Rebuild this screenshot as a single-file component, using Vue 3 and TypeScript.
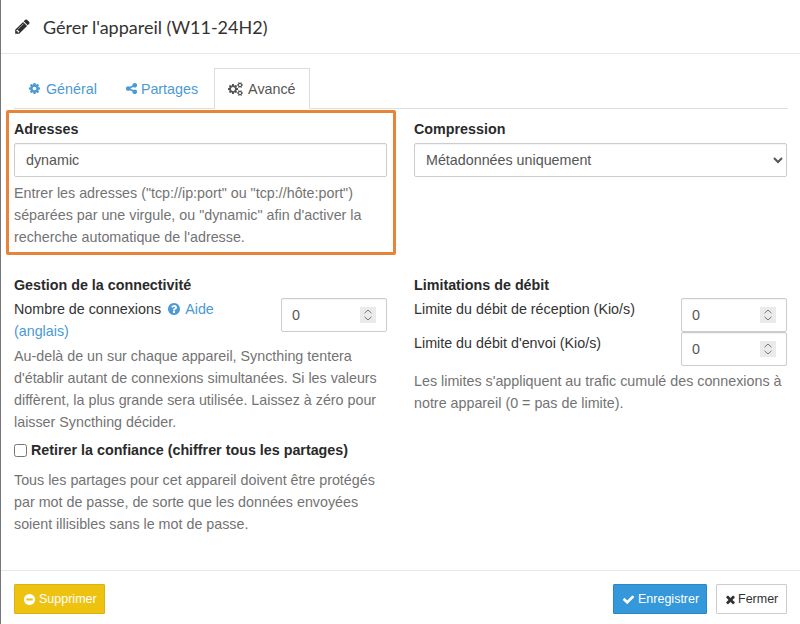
<script setup lang="ts">
const icons: Record<string, string> = {
  pencil: 'M491 1536l91-91-235-235-91 91v107h128v128h107zm523-928q0-22-22-22-10 0-17 7l-542 542q-7 7-7 17 0 22 22 22 10 0 17-7l542-542q7-7 7-17zm-54-192l416 416-832 832h-416v-416zm683 96q0 53-37 90l-166 166-416-416 166-165q36-38 90-38 53 0 91 38l235 234q37 39 37 91z',
  cog: 'M1152 896q0-106-75-181t-181-75-181 75-75 181 75 181 181 75 181-75 75-181zm512-109v222q0 12-8 23t-20 13l-185 28q-19 54-39 91 35 50 107 138 10 12 10 25t-9 23q-27 37-99 108t-94 71q-12 0-26-9l-138-108q-44 23-91 38-16 136-29 186-7 28-36 28h-222q-14 0-24.5-8.5t-11.5-21.5l-28-184q-49-16-90-37l-141 107q-10 9-25 9-14 0-25-11-126-114-165-168-7-10-7-23 0-12 8-23 15-21 51-66.5t54-70.5q-27-50-41-99l-183-27q-13-2-21-12.5t-8-23.5v-222q0-12 8-23t19-13l186-28q14-46 39-92-40-57-107-138-10-12-10-24 0-10 9-23 26-36 98.5-107.5t94.5-71.5q13 0 26 10l138 107q44-23 91-38 16-136 29-186 7-28 36-28h222q14 0 24.5 8.5t11.5 21.5l28 184q49 16 90 37l142-107q9-9 24-9 13 0 25 10 129 119 165 170 7 8 7 22 0 12-8 23-15 21-51 66.5t-54 70.5q26 50 41 98l183 28q13 2 21 12.5t8 23.5z',
  share: 'M1344 1024q133 0 226.5 93.5t93.5 226.5-93.5 226.5-226.5 93.5-226.5-93.5-93.5-226.5q0-12 2-34l-360-180q-92 86-218 86-133 0-226.5-93.5t-93.5-226.5 93.5-226.5 226.5-93.5q126 0 218 86l360-180q-2-22-2-34 0-133 93.5-226.5t226.5-93.5 226.5 93.5 93.5 226.5-93.5 226.5-226.5 93.5q-126 0-218-86l-360 180q2 22 2 34t-2 34l360 180q92-86 218-86z',
  question: 'M1024 1376v-192q0-14-9-23t-23-9h-192q-14 0-23 9t-9 23v192q0 14 9 23t23 9h192q14 0 23-9t9-23zm256-672q0-88-55.5-163t-138.5-116-170-41q-243 0-371 213-15 24 8 42l132 100q7 6 19 6 16 0 25-12 53-68 86-92 34-24 86-24 48 0 85.5 26t37.5 59q0 38-20 61t-68 45q-63 28-115.5 86.5t-52.5 125.5v36q0 14 9 23t23 9h192q14 0 23-9t9-23q0-19 21.5-49.5t54.5-49.5q32-18 49-28.5t46-35 44.5-48 28-60.5 12.5-81zm384 192q0 209-103 385.5t-279.5 279.5-385.5 103-385.5-103-279.5-279.5-103-385.5 103-385.5 279.5-279.5 385.5-103 385.5 103 279.5 279.5 103 385.5z',
  minus: 'M1344 960v-128q0-26-19-45t-45-19h-768q-26 0-45 19t-19 45v128q0 26 19 45t45 19h768q26 0 45-19t19-45zm320-64q0 209-103 385.5t-279.5 279.5-385.5 103-385.5-103-279.5-279.5-103-385.5 103-385.5 279.5-279.5 385.5-103 385.5 103 279.5 279.5 103 385.5z',
  check: 'M1671 566q0 40-28 68l-724 724-136 136q-28 28-68 28t-68-28l-136-136-362-362q-28-28-28-68t28-68l136-136q28-28 68-28t68 28l294 295 656-657q28-28 68-28t68 28l136 136q28 28 28 68z',
  times: 'M1490 1322q0 40-28 68l-136 136q-28 28-68 28t-68-28l-294-294-294 294q-28 28-68 28t-68-28l-136-136q-28-28-28-68t28-68l294-294-294-294q-28-28-28-68t28-68l136-136q28-28 68-28t68 28l294 294 294-294q28-28 68-28t68 28l136 136q28 28 28 68t-28 68l-294 294 294 294q28 28 28 68z'
}
const cogs = 'M896 896q0-106-75-181t-181-75-181 75-75 181 75 181 181 75 181-75 75-181zm768 512q0-52-38-90t-90-38-90 38-38 90q0 53 37.5 90.5t90.5 37.5 90.5-37.5 37.5-90.5zm0-1024q0-52-38-90t-90-38-90 38-38 90q0 53 37.5 90.5t90.5 37.5 90.5-37.5 37.5-90.5zm-384 421v185q0 10-7 19.5t-16 10.5l-155 24q-11 35-32 76 34 48 90 115 7 11 7 20 0 12-7 19-23 30-82.5 89.5t-78.5 59.5q-11 0-21-7l-115-90q-37 19-77 31-11 108-23 155-7 24-30 24h-186q-11 0-20-7.5t-10-17.5l-23-153q-34-10-75-31l-118 89q-7 7-20 7-11 0-21-8-144-133-144-160 0-9 7-19 10-14 41-53t47-61q-23-44-35-82l-152-24q-10-1-17-9.5t-7-19.5v-185q0-10 7-19.5t16-10.5l155-24q11-35 32-76-34-48-90-115-7-11-7-20 0-12 7-20 22-30 82-89t79-59q11 0 21 7l115 90q34-18 77-32 11-108 23-154 7-24 30-24h186q11 0 20 7.5t10 17.5l23 153q34 10 75 31l118-89q8-7 20-7 11 0 21 8 144 133 144 160 0 8-7 19-12 16-42 54t-45 60q23 48 34 82l152 23q10 2 17 10.5t7 19.5zm640 533v140q0 16-149 31-12 27-30 52 51 113 51 138 0 4-4 7-122 71-124 71-8 0-46-47t-52-68q-20 2-30 2t-30-2q-14 21-52 68t-46 47q-2 0-124-71-4-3-4-7 0-25 51-138-18-25-30-52-149-15-149-31v-140q0-16 149-31 13-29 30-52-51-113-51-138 0-4 4-7 4-2 35-20t59-34 30-16q8 0 46 46.5t52 67.5q20-2 30-2t30 2q51-71 92-112l6-2q4 0 124 70 4 3 4 7 0 25-51 138 17 23 30 52 149 15 149 31zm0-1024v140q0 16-149 31-12 27-30 52 51 113 51 138 0 4-4 7-122 71-124 71-8 0-46-47t-52-68q-20 2-30 2t-30-2q-14 21-52 68t-46 47q-2 0-124-71-4-3-4-7 0-25 51-138-18-25-30-52-149-15-149-31v-140q0-16 149-31 13-29 30-52-51-113-51-138 0-4 4-7 4-2 35-20t59-34 30-16q8 0 46 46.5t52 67.5q20-2 30-2t30 2q51-71 92-112l6-2q4 0 124 70 4 3 4 7 0 25-51 138 17 23 30 52 149 15 149 31z'
</script>

<template>
  <div class="dialog">
    <header class="head">
      <svg class="pencil" viewBox="0 0 1792 1792"><path :d="icons.pencil" /></svg>
      <h1>Gérer l'appareil (W11-24H2)</h1>
    </header>

    <div class="body">
      <nav class="tabs">
        <a class="tab general"><svg class="ico" viewBox="0 0 1792 1792"><path :d="icons.cog" /></svg>Général</a>
        <a class="tab shares"><svg class="ico" viewBox="0 0 1792 1792"><path :d="icons.share" /></svg>Partages</a>
        <a class="tab active"><svg class="ico cogs" viewBox="0 0 2048 1792"><path :d="cogs" /></svg>Avancé</a>
      </nav>

      <div class="grid first">
        <section>
          <label class="strong">Adresses</label>
          <input class="control" type="text" value="dynamic" />
          <p class="help">Entrer les adresses ("tcp://ip:port" ou "tcp://hôte:port") séparées par une virgule, ou "dynamic" afin d'activer la recherche automatique de l'adresse.</p>
        </section>
        <section>
          <label class="strong">Compression</label>
          <select class="control">
            <option>Métadonnées uniquement</option>
          </select>
        </section>
      </div>

      <div class="grid second">
        <section>
          <label class="strong heading">Gestion de la connectivité</label>
          <div class="num-row">
            <div class="num-label">Nombre de connexions <a class="link"><svg class="help-ico" viewBox="0 0 1792 1792"><path :d="icons.question" /></svg> Aide (anglais)</a></div>
            <div class="num-wrap">
              <input class="control num" type="number" value="0" />
              <svg class="spin" viewBox="0 0 16 16"><path d="M4.5 6.2 8 3l3.5 3.2M4.5 9.8 8 13l3.5-3.2" /></svg>
            </div>
          </div>
          <p class="help conn">Au-delà de un sur chaque appareil, Syncthing tentera d'établir autant de connexions simultanées. Si les valeurs diffèrent, la plus grande sera utilisée. Laissez à zéro pour laisser Syncthing décider.</p>
          <label class="check strong"><input type="checkbox" /> Retirer la confiance (chiffrer tous les partages)</label>
          <p class="help untrust">Tous les partages pour cet appareil doivent être protégés par mot de passe, de sorte que les données envoyées soient illisibles sans le mot de passe.</p>
        </section>
        <section>
          <label class="strong heading">Limitations de débit</label>
          <div class="num-row">
            <div class="num-label">Limite du débit de réception (Kio/s)</div>
            <div class="num-wrap">
              <input class="control num" type="number" value="0" />
              <svg class="spin" viewBox="0 0 16 16"><path d="M4.5 6.2 8 3l3.5 3.2M4.5 9.8 8 13l3.5-3.2" /></svg>
            </div>
          </div>
          <div class="num-row">
            <div class="num-label">Limite du débit d'envoi (Kio/s)</div>
            <div class="num-wrap">
              <input class="control num" type="number" value="0" />
              <svg class="spin" viewBox="0 0 16 16"><path d="M4.5 6.2 8 3l3.5 3.2M4.5 9.8 8 13l3.5-3.2" /></svg>
            </div>
          </div>
          <p class="help limits">Les limites s'appliquent au trafic cumulé des connexions à notre appareil (0 = pas de limite).</p>
        </section>
      </div>
    </div>

    <footer class="foot">
      <button class="btn warn"><svg class="ico" viewBox="0 0 1792 1792"><path :d="icons.minus" /></svg>Supprimer</button>
      <div class="foot-right">
        <button class="btn primary"><svg class="ico" viewBox="0 0 1792 1792"><path :d="icons.check" /></svg>Enregistrer</button>
        <button class="btn plain"><svg class="ico" viewBox="0 0 1792 1792"><path :d="icons.times" /></svg>Fermer</button>
      </div>
    </footer>

    <div class="highlight"></div>
  </div>
</template>

<style scoped>
.dialog {
  position: relative;
  box-sizing: border-box;
  width: 800px;
  height: 624px;
  overflow: hidden;
  background: #fff;
  border-left: 1px solid #777;
  color: #333;
  font-family: "Liberation Sans", Arial, sans-serif;
  font-size: 14.3px;
  line-height: 22px;
  display: flex;
  flex-direction: column;
}
.head {
  height: 54px;
  box-sizing: border-box;
  border-bottom: 1px solid #e8e8e8;
  display: flex;
  align-items: center;
  padding: 0 0 0 13px;
  gap: 12px;
}
.pencil {
  width: 17px;
  height: 17px;
  fill: #2c2c2c;
}
h1 {
  margin: 0;
  font-family: Lato, "Open Sans", sans-serif;
  font-weight: 400;
  font-size: 18px;
  color: #333;
}
.body {
  flex: 1;
  padding: 14px 12px 0 13px;
}
.tabs {
  display: flex;
  height: 41px;
  box-sizing: border-box;
  border-bottom: 1px solid #ddd;
}
.tab {
  display: flex;
  align-items: center;
  gap: 4px;
  padding: 0 14px 0 13px;
  color: #4a9ad4;
  margin-bottom: -1px;
  box-sizing: border-box;
  border: 1px solid transparent;
}
.general { gap: 5px; }
.shares { gap: 3px; padding: 0 15px 0 12px; }
.tab.active {
  color: #555;
  background: #fff;
  border-color: #ddd;
  border-bottom-color: #fff;
  padding: 0 13px 0 13px;
}
.ico {
  width: 13px;
  height: 13px;
  fill: currentColor;
  flex: none;
}
.ico.cogs { width: 16px; height: 14px; }
.grid {
  display: grid;
  grid-template-columns: 373px 373px;
  column-gap: 27px;
}
.first { padding-top: 9px; height: 165px; box-sizing: border-box; }
.strong {
  display: block;
  font-weight: 700;
  color: #2a2a2a;
  height: 25px;
}
.control {
  display: block;
  box-sizing: border-box;
  width: 100%;
  height: 34px;
  border: 1px solid #ccc;
  border-radius: 2px;
  background: #fff;
  color: #555;
  font: inherit;
  padding: 0 11px;
  outline: none;
  box-shadow: inset 0 1px 1px rgba(0, 0, 0, .05);
}
select.control { padding: 0 7px; }
.help {
  margin: 5px 0 0;
  color: #737373;
}
.strong.heading { height: 24px; }
.num-row {
  display: flex;
  justify-content: space-between;
  align-items: flex-start;
}
.num-label {
  width: 240px;
  color: #333;
  flex: none;
}
.num-wrap {
  position: relative;
  width: 106px;
  height: 34px;
  flex: none;
}
.control.num {
  width: 100%;
  padding: 0 10px;
  appearance: textfield;
  -moz-appearance: textfield;
}
.num::-webkit-inner-spin-button,
.num::-webkit-outer-spin-button {
  -webkit-appearance: none;
  margin: 0;
}
.spin {
  position: absolute;
  right: 11px;
  top: 9px;
  width: 16px;
  height: 16px;
  background: #ebebeb;
  fill: none;
  stroke: #777;
  stroke-width: 1;
}
.link { color: #4a9ad4; }
.help-ico {
  width: 14px;
  height: 14px;
  fill: currentColor;
  vertical-align: -2px;
  margin-left: 2px;
  margin-right: 1px;
}
.conn { margin-top: 3px; }
.strong.check {
  display: flex;
  align-items: center;
  gap: 4px;
  margin-top: 5px;
  height: 24px;
}
.check input {
  margin: 0;
  width: 13px;
  height: 13px;
}
.untrust { margin-top: 7px; }
.limits { margin-top: 4px; }
.foot {
  height: 54px;
  box-sizing: border-box;
  border-top: 1px solid #e8e8e8;
  padding: 13px 13px 0 13px;
  display: flex;
  justify-content: space-between;
  align-items: flex-start;
}
.foot-right { display: flex; gap: 9px; }
.btn {
  display: flex;
  align-items: center;
  gap: 3px;
  height: 30px;
  box-sizing: border-box;
  font-family: inherit;
  font-size: 12.5px;
  padding: 0 8px;
  border: 1px solid transparent;
  border-radius: 1px;
}
.btn .ico { width: 13px; height: 13px; }
.warn { background: #eec211; border-color: #dcb20c; color: #fff; width: 91px; }
.primary { background: #3498db; border-color: #2a87c6; color: #fff; width: 94px; }
.plain { background: #fff; border-color: #ccc; color: #333; width: 71px; padding: 0 7px; gap: 1px; }
.highlight {
  position: absolute;
  left: 5px;
  top: 110px;
  width: 390px;
  height: 145px;
  box-sizing: border-box;
  border: 3px solid #e8833a;
  border-radius: 2px;
  pointer-events: none;
}
</style>
